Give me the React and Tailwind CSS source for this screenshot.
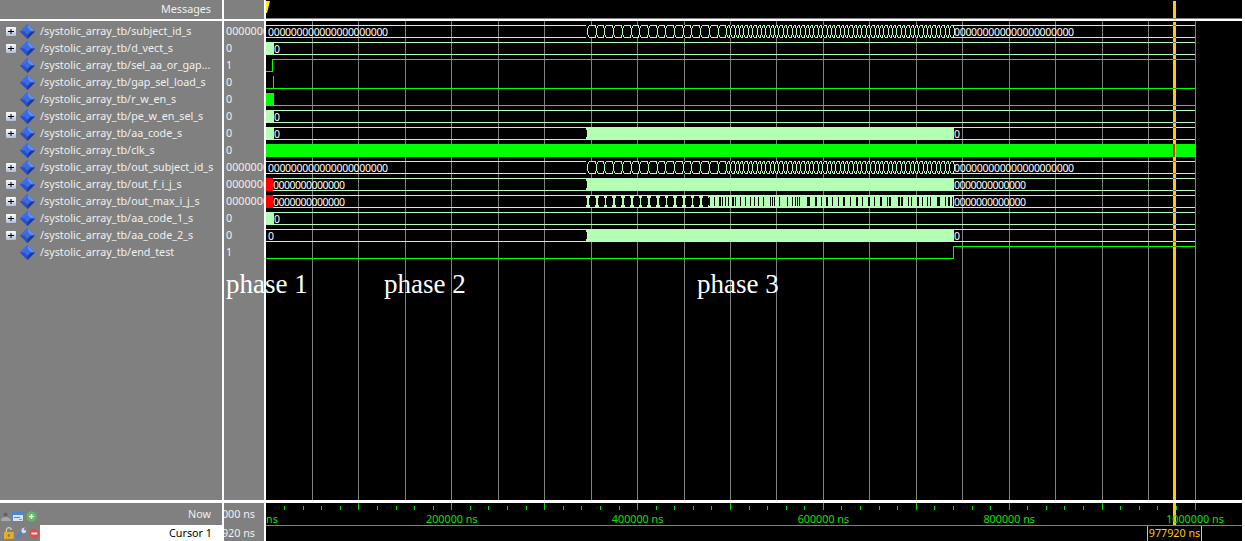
const BUS = '#b3ffb3'
const BIT = '#00ff00'
const X0 = 266
const X_END = 1195
const CURSOR_X = 1173
const PAT_START = 587
const PAT_END = 954

const SIGNALS = [
  { name: 'subject_id_s', value: '0000000', expand: true },
  { name: 'd_vect_s', value: '0', expand: true },
  { name: 'sel_aa_or_gap...', value: '1' },
  { name: 'gap_sel_load_s', value: '0' },
  { name: 'r_w_en_s', value: '0' },
  { name: 'pe_w_en_sel_s', value: '0', expand: true },
  { name: 'aa_code_s', value: '0', expand: true },
  { name: 'clk_s', value: '0' },
  { name: 'out_subject_id_s', value: '0000000', expand: true },
  { name: 'out_f_i_j_s', value: '0000000', expand: true },
  { name: 'out_max_i_j_s', value: '0000000', expand: true },
  { name: 'aa_code_1_s', value: '0', expand: true },
  { name: 'aa_code_2_s', value: '0', expand: true },
  { name: 'end_test', value: '1' },
]

const ZEROS_21 = '0'.repeat(21)
const ZEROS_13 = '0'.repeat(13)

const rowTop = i => 25 + i * 17

// black gaps in the out_max row after it speeds up, read off the picture
const MAX_GAPS = [
  [709, 1], [714, 1], [719, 2], [722, 1], [725, 1], [728, 1], [732, 2], [735, 1], [740, 1], [745, 1], [750, 1], [754, 1], [758, 1], [763, 1],
  [770, 1], [772, 1], [774, 1], [779, 1], [787, 1], [792, 1], [795, 1], [797, 1], [799, 1], [807, 3],
  [815, 2], [821, 1], [826, 2], [832, 1], [838, 1], [843, 2], [850, 1], [856, 2], [862, 1], [868, 2], [874, 1],
  [880, 2], [887, 1], [889, 2], [898, 2], [901, 2], [908, 1], [911, 1], [917, 2], [922, 1], [927, 1], [930, 1], [937, 3], [945, 1], [948, 2], [952, 1],
]

function cellEdges() {
  const edges = []
  for (let x = PAT_START; x < 726; x += 8.7) edges.push(Math.round(x))
  for (let x = 726; x < PAT_END - 2; x += 4.37) edges.push(Math.round(x))
  edges.push(PAT_END)
  return edges
}

function Hl({ x = X0, to = X_END, y, c = BUS }) {
  return <rect x={x} y={y} width={to - x} height={1} fill={c} />
}

function BusLines({ row }) {
  const t = rowTop(row)
  return (
    <>
      <Hl y={t} />
      <Hl y={t + 12} />
    </>
  )
}

function BusFill({ x, to, row }) {
  return <rect x={x} y={rowTop(row)} width={to - x} height={13} fill={BUS} />
}

// filled stretch that opens with the little notch a bus transition leaves
function BusBlock({ row }) {
  const t = rowTop(row)
  return (
    <>
      <BusFill x={PAT_START - 1} to={PAT_END} row={row} />
      <rect x={PAT_START - 1} y={t + 3} width={1} height={7} fill="#000" />
    </>
  )
}

function BusText({ x, row, tight, children }) {
  return (
    <text x={x} y={rowTop(row) + 11} fill="#fff" className="font-['Noto_Sans'] text-[10.5px]" style={{ letterSpacing: tight ? '-0.5px' : '-0.3px' }}>
      {children}
    </text>
  )
}

function Cell({ a, b, t }) {
  const w = b - a
  return (
    <>
      <rect x={a + 2} y={t} width={w - 2} height={1} fill={BUS} />
      <rect x={a + 2} y={t + 12} width={w - 2} height={1} fill={BUS} />
      <rect x={a + 1} y={t + 1} width={1} height={2} fill={BUS} />
      <rect x={a + 1} y={t + 10} width={1} height={2} fill={BUS} />
      <rect x={a} y={t + 3} width={1} height={7} fill={BUS} />
      <rect x={b - 1} y={t + 1} width={1} height={2} fill={BUS} />
      <rect x={b - 1} y={t + 10} width={1} height={2} fill={BUS} />
      <rect x={b} y={t + 3} width={1} height={7} fill={BUS} />
    </>
  )
}

function HexRow({ row }) {
  const edges = cellEdges()
  const t = rowTop(row)
  return (
    <>
      <rect x={PAT_START - 1} y={t} width={PAT_END - PAT_START + 1} height={13} fill="#000" />
      {edges.slice(0, -1).map((e, i) => (
        <Cell key={i} a={e} b={edges[i + 1]} t={t} />
      ))}
    </>
  )
}

function MaxRow({ row }) {
  const t = rowTop(row)
  const blobs = []
  for (let x = 589; x < 706; x += 8.7) blobs.push(Math.round(x))
  return (
    <>
      <BusBlock row={row} />
      {blobs.map(x => (
        <g key={x}>
          <rect x={x + 1} y={t + 1} width={5} height={11} fill="#000" />
          <rect x={x} y={t + 3} width={7} height={7} fill="#000" />
        </g>
      ))}
      {MAX_GAPS.map(([x, w]) => (
        <rect key={x} x={x} y={t + 2} width={w} height={9} fill="#000" />
      ))}
    </>
  )
}

function Waves() {
  const grid = Array.from({ length: 20 }, (_, i) => Math.floor(X0 + (i + 1) * 46.45))
  const crossBus = [25, 37, 42, 54, 110, 122, 127, 139, 161, 173, 178, 190, 195, 207, 212, 224, 229, 241]
  const crossBit = [59, 88, 105, 246]
  return (
    <svg viewBox="266 21 976 479" className="block w-[976px] h-[479px]" shapeRendering="crispEdges">
      {grid.map(x => (
        <rect key={x} x={x} y={21} width={1} height={479} fill="#808080" />
      ))}

      {/* subject_id_s */}
      <BusLines row={0} />
      <HexRow row={0} />
      <BusText x={268} row={0}>{ZEROS_21}</BusText>
      <BusText x={954} row={0}>{ZEROS_21}</BusText>

      {/* d_vect_s */}
      <BusLines row={1} />
      <BusFill x={266} to={274} row={1} />
      <BusText x={274} row={1}>0</BusText>

      {/* sel_aa_or_gap */}
      <Hl to={272} y={71} c={BIT} />
      <rect x={272} y={59} width={1} height={13} fill={BIT} />
      <Hl x={272} y={59} c={BIT} />

      {/* gap_sel_load_s */}
      <Hl y={88} c={BIT} />
      <rect x={273} y={76} width={1} height={12} fill={BIT} />

      {/* r_w_en_s */}
      <rect x={266} y={93} width={8} height={13} fill={BIT} />
      <Hl y={105} c={BIT} />

      {/* pe_w_en_sel_s */}
      <BusLines row={5} />
      <BusFill x={266} to={274} row={5} />
      <BusText x={274} row={5}>0</BusText>

      {/* aa_code_s */}
      <BusLines row={6} />
      <BusFill x={266} to={274} row={6} />
      <BusBlock row={6} />
      <BusText x={274} row={6}>0</BusText>
      <BusText x={954} row={6}>0</BusText>

      {/* clk_s */}
      <rect x={266} y={144} width={X_END - 266 + 1} height={13} fill={BIT} />

      {/* out_subject_id_s */}
      <BusLines row={8} />
      <HexRow row={8} />
      <BusText x={268} row={8}>{ZEROS_21}</BusText>
      <BusText x={954} row={8}>{ZEROS_21}</BusText>

      {/* out_f_i_j_s */}
      <BusLines row={9} />
      <rect x={266} y={178} width={7} height={13} fill="#ff0000" />
      <BusBlock row={9} />
      <BusText x={273} row={9} tight>{ZEROS_13}</BusText>
      <BusText x={954} row={9} tight>{ZEROS_13}</BusText>

      {/* out_max_i_j_s */}
      <BusLines row={10} />
      <rect x={266} y={195} width={7} height={13} fill="#ff0000" />
      <MaxRow row={10} />
      <BusText x={273} row={10} tight>{ZEROS_13}</BusText>
      <BusText x={954} row={10} tight>{ZEROS_13}</BusText>

      {/* aa_code_1_s */}
      <BusLines row={11} />
      <BusFill x={266} to={274} row={11} />
      <BusText x={274} row={11}>0</BusText>

      {/* aa_code_2_s */}
      <BusLines row={12} />
      <BusBlock row={12} />
      <BusText x={268} row={12}>0</BusText>
      <BusText x={954} row={12}>0</BusText>

      {/* end_test */}
      <Hl to={953} y={258} c={BIT} />
      <rect x={953} y={246} width={1} height={13} fill={BIT} />
      <Hl x={953} y={246} c={BIT} />

      {/* cursor */}
      <rect x={CURSOR_X} y={22} width={3} height={478} fill="#ffcc00" />
      {crossBus.map(y => (
        <rect key={y} x={CURSOR_X} y={y} width={3} height={1} fill="#5a5ae0" />
      ))}
      {crossBit.map(y => (
        <rect key={y} x={CURSOR_X} y={y} width={3} height={1} fill="#ff3000" />
      ))}
      <rect x={CURSOR_X} y={144} width={2} height={13} fill="#ff2000" />
    </svg>
  )
}

function Ruler() {
  const ticks = Array.from({ length: 51 }, (_, i) => i).slice(1)
  const labels = [200000, 400000, 600000, 800000, 1000000]
  return (
    <svg viewBox="266 503 976 22" className="block w-[976px] h-[22px]">
      <g shapeRendering="crispEdges">
        {ticks.map(i => {
          const x = Math.floor(X0 + i * 18.58)
          const major = i % 5 === 0
          return <rect key={i} x={x} y={major ? 503 : 506} width={1} height={major ? 7 : 4} fill="#00e000" />
        })}
        <rect x={CURSOR_X} y={503} width={3} height={22} fill="#ffcc00" />
      </g>
      <text x={266} y={523} fill="#00e600" className="font-['Noto_Sans'] text-[10.75px]">ns</text>
      {labels.map(v => (
        <text key={v} x={X0 + (v / 1000000) * 929} y={523} textAnchor="middle" fill="#00e600" className="font-['Noto_Sans'] text-[10.75px]">
          {v} ns
        </text>
      ))}
    </svg>
  )
}

function Expander() {
  return (
    <svg width="10" height="9" viewBox="0 0 10 9" className="shrink-0">
      <defs>
        <linearGradient id="exp" x1="0" y1="0" x2="0" y2="1">
          <stop offset="0" stopColor="#ffffff" />
          <stop offset="1" stopColor="#b4bcd8" />
        </linearGradient>
      </defs>
      <rect width="10" height="9" rx="1" fill="url(#exp)" />
      <path d="M2 4h6v1H2zM4.5 2h1v5h-1z" fill="#000" />
    </svg>
  )
}

function Diamond() {
  return (
    <svg width="15" height="15" viewBox="0 0 15 15" className="shrink-0">
      <path d="M7.5 0L15 7.5L7.5 15L0 7.5Z" fill="#2b50c8" />
      <path d="M7.5 0L15 7.5L11 7.5L7.5 4Z" fill="#5f8ef5" />
      <path d="M7.5 0L7.5 4L4 7.5L0 7.5Z" fill="#3f6fe8" />
      <path d="M7.5 4L11 7.5L7.5 11L4 7.5Z" fill="#3a6ae6" />
      <path d="M0 7.5L4 7.5L7.5 11L7.5 15Z" fill="#2c4fc4" />
      <path d="M15 7.5L11 7.5L7.5 11L7.5 15Z" fill="#1e3aa0" />
    </svg>
  )
}

function SignalName({ name, expand }) {
  return (
    <div className="h-[17px] flex items-center">
      <div className="w-[20px] pl-[6px] shrink-0 flex">{expand && <Expander />}</div>
      <Diamond />
      <span className="ml-[5px] whitespace-nowrap text-[#f0f0f0]">/systolic_array_tb/{name}</span>
    </div>
  )
}

function NowIcons() {
  return (
    <div className="flex items-center gap-[1px] pl-[1px] pt-[5px]">
      <svg width="10" height="9" viewBox="0 0 10 9">
        <circle cx="4.5" cy="2.5" r="2" fill="#5a6470" />
        <path d="M0 9c0-3 2-4 4.5-4s5 1 5.5 4z" fill="#a8a8a8" />
      </svg>
      <svg width="12" height="10" viewBox="0 0 12 10">
        <rect width="12" height="10" fill="#4d86d0" />
        <rect x="1" y="3" width="10" height="6" fill="#d8e4f4" />
        <rect x="2" y="5" width="6" height="1" fill="#4d86d0" />
        <rect x="7" y="7" width="3" height="1" fill="#7a9ac8" />
      </svg>
      <svg width="11" height="11" viewBox="0 0 11 11" className="ml-[1px]">
        <circle cx="5.5" cy="5.5" r="5.2" fill="#62b562" />
        <path d="M3 4.7h5v1.6H3zM4.7 3h1.6v5H4.7z" fill="#e8ffe8" />
      </svg>
    </div>
  )
}

function CursorIcons() {
  return (
    <div className="w-[40px] shrink-0 flex items-center gap-[2px] pl-[4px]">
      <svg width="10" height="12" viewBox="0 0 10 12">
        <path d="M2.5 6V3a2.5 2.5 0 0 1 5 0" fill="none" stroke="#d8d0a0" strokeWidth="1.2" />
        <rect y="5" width="10" height="7" fill="#e2ad35" />
        <rect x="4" y="7" width="2" height="3" fill="#a87a18" />
      </svg>
      <svg width="11" height="12" viewBox="0 0 11 12">
        <path d="M1.5 10.5L7 4.5" fill="none" stroke="#4f7fd0" strokeWidth="3" />
        <path d="M5.5 4.5L6 1.5L9 0L8 2.5L9 3.5L11 2.5L10 5.5L7 6.5Z" fill="#d0def4" />
      </svg>
      <svg width="11" height="11" viewBox="0 0 11 11" className="ml-[1px]">
        <circle cx="5.5" cy="5.5" r="5.2" fill="#d85050" />
        <rect x="2.5" y="4.5" width="6" height="2" fill="#ffe8e8" />
      </svg>
    </div>
  )
}

export default function App() {
  return (
    <div className="relative flex w-[1245px] h-[541px] overflow-hidden bg-white font-['Noto_Sans'] text-[10.75px]">
      {/* names */}
      <div className="w-[224px] shrink-0 border-r-2 border-white bg-[#808080]">
        <div className="h-[19px] pr-[11px] flex items-center justify-end text-[#f0f0f0]">Messages</div>
        <div className="h-[2px] bg-white" />
        <div className="h-[479px] pt-[2px]">
          {SIGNALS.map(s => <SignalName key={s.name} {...s} />)}
        </div>
        <div className="h-[3px] bg-white" />
        <div className="h-[22px] flex items-center justify-between pr-[11px] text-[#f0f0f0]">
          <NowIcons />
          <span>Now</span>
        </div>
        <div className="h-[16px] flex">
          <CursorIcons />
          <div className="flex-1 bg-white pr-[10px] flex items-center justify-end text-black">Cursor 1</div>
        </div>
      </div>

      {/* values */}
      <div className="w-[42px] shrink-0 border-r-2 border-white bg-[#808080] overflow-hidden">
        <div className="h-[19px]" />
        <div className="h-[2px] bg-white" />
        <div className="h-[479px] pt-[2px] pl-[2px] text-[#f0f0f0]">
          {SIGNALS.map(s => (
            <div key={s.name} className="h-[17px] flex items-center whitespace-nowrap">{s.value}</div>
          ))}
        </div>
        <div className="h-[3px] bg-white" />
        <div className="h-[22px] flex items-center justify-end pr-[9px] whitespace-nowrap text-[#f0f0f0]">000 ns</div>
        <div className="h-[16px] flex items-center justify-end pr-[9px] whitespace-nowrap text-[#f0f0f0]">920 ns</div>
      </div>

      {/* waves */}
      <div className="w-[976px] shrink-0 bg-black">
        <div className="h-[18px] relative">
          <svg width="5" height="12" viewBox="0 0 5 12" className="absolute left-0 top-[1px]">
            <path d="M0 0H4L1 12H0Z" fill="#ffee00" />
          </svg>
          <div className="absolute left-[907px] top-[1px] w-[3px] h-[17px] bg-[#ffcc00]" />
        </div>
        <div className="h-px bg-[#808080]" />
        <div className="h-[2px] bg-white" />
        <Waves />
        <div className="h-[3px] bg-white" />
        <Ruler />
        <div className="relative h-[16px] border-t border-[#808080]">
          <div className="absolute left-[881px] top-0 w-[55px] h-[16px] border border-t-0 border-[#ffcc00] text-[#ffcc00] flex items-center justify-center whitespace-nowrap">977920 ns</div>
        </div>
      </div>

      {/* annotations pasted over the wave window */}
      <span className="absolute left-[226px] top-[269px] font-['Liberation_Serif'] text-[27px] leading-[30px] text-white whitespace-nowrap">phase 1</span>
      <span className="absolute left-[384px] top-[269px] font-['Liberation_Serif'] text-[27px] leading-[30px] text-white whitespace-nowrap">phase 2</span>
      <span className="absolute left-[697px] top-[269px] font-['Liberation_Serif'] text-[27px] leading-[30px] text-white whitespace-nowrap">phase 3</span>
    </div>
  )
}
